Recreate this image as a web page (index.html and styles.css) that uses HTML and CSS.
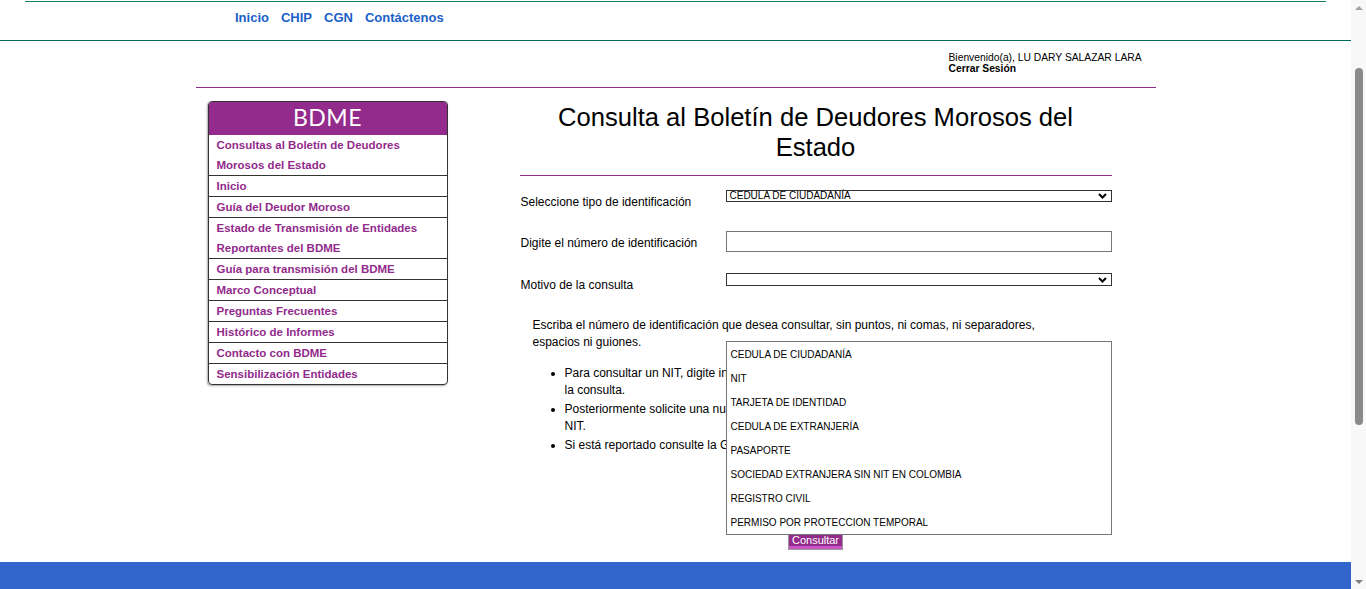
FILE: index.html
```html
<!DOCTYPE html>
<html lang="es">
<head>
<meta charset="utf-8">
<title>Consulta BDME</title>
<link rel="stylesheet" href="styles.css">
</head>
<body>
<div class="screen">
  <div class="page">
    <div class="topline"></div>
    <nav class="nav">
      <a href="#">Inicio</a>
      <a href="#">CHIP</a>
      <a href="#">CGN</a>
      <a href="#">Contáctenos</a>
    </nav>
    <div class="rule-teal"></div>
    <div class="container">
      <div class="userbar">
        <div>Bienvenido(a), LU DARY SALAZAR LARA</div>
        <a class="logout" href="#">Cerrar Sesión</a>
      </div>
      <div class="rule-purple"></div>
      <div class="content">
        <aside class="sidebar">
          <div class="side-head">BDME</div>
          <ul class="side-list">
            <li><a href="#">Consultas al Boletín de Deudores Morosos del Estado</a></li>
            <li><a href="#">Inicio</a></li>
            <li><a href="#">Guía del Deudor Moroso</a></li>
            <li><a href="#">Estado de Transmisión de Entidades Reportantes del BDME</a></li>
            <li><a href="#">Guía para transmisión del BDME</a></li>
            <li><a href="#">Marco Conceptual</a></li>
            <li><a href="#">Preguntas Frecuentes</a></li>
            <li><a href="#">Histórico de Informes</a></li>
            <li><a href="#">Contacto con BDME</a></li>
            <li><a href="#">Sensibilización Entidades</a></li>
          </ul>
        </aside>
        <main class="main">
          <h1 class="title">Consulta al Boletín de Deudores Morosos del Estado</h1>
          <div class="title-rule"></div>
          <div class="form">
            <div class="row row-1">
              <div class="label">Seleccione tipo de identificación</div>
              <div class="select">
                <span>CEDULA DE CIUDADANÍA</span>
                <svg class="chev" width="9" height="6" viewBox="0 0 9 6"><path d="M1 1 L4.5 4.5 L8 1" fill="none" stroke="#000" stroke-width="2"/></svg>
              </div>
            </div>
            <div class="row row-2">
              <div class="label">Digite el número de identificación</div>
              <input class="input" type="text" aria-label="Número de identificación">
            </div>
            <div class="row row-3">
              <div class="label">Motivo de la consulta</div>
              <div class="select select-tall">
                <span></span>
                <svg class="chev" width="9" height="6" viewBox="0 0 9 6"><path d="M1 1 L4.5 4.5 L8 1" fill="none" stroke="#000" stroke-width="2"/></svg>
              </div>
            </div>
          </div>
          <p class="note">Escriba el número de identificación que desea consultar, sin puntos, ni comas, ni separadores, espacios ni guiones.</p>
          <ul class="bullets">
            <li>Para consultar un NIT, digite inicialmente el número sin dígito de verificación y realice<br>la consulta.</li>
            <li>Posteriormente solicite una nueva consulta con el dígito de verificación del<br>NIT.</li>
            <li>Si está reportado consulte la Guía del Deudor Moroso.</li>
          </ul>
          <div class="actions"><button class="btn" type="button">Consultar</button></div>
          <ul class="popup">
            <li>CEDULA DE CIUDADANÍA</li>
            <li>NIT</li>
            <li>TARJETA DE IDENTIDAD</li>
            <li>CEDULA DE EXTRANJERÍA</li>
            <li>PASAPORTE</li>
            <li>SOCIEDAD EXTRANJERA SIN NIT EN COLOMBIA</li>
            <li>REGISTRO CIVIL</li>
            <li>PERMISO POR PROTECCION TEMPORAL</li>
          </ul>
        </main>
      </div>
    </div>
    <footer class="footer"></footer>
  </div>
  <div class="scrollbar">
    <div class="sb-btn"><span class="arrow-up"></span></div>
    <div class="sb-track"><div class="sb-thumb"></div></div>
    <div class="sb-btn"><span class="arrow-down"></span></div>
  </div>
</div>
</body>
</html>
```
FILE: styles.css
```css
html, body {
  margin: 0;
  padding: 0;
  background: #fff;
}
body {
  font-family: "Liberation Sans", Arial, sans-serif;
  color: #000;
  overflow: hidden;
}
.screen {
  display: flex;
  height: 589px;
  overflow: hidden;
}
.page {
  flex: 1;
  min-width: 0;
  display: flex;
  flex-direction: column;
}
.topline {
  height: 1px;
  margin: 1px 25px 0;
  background: #168062;
}
.nav {
  height: 38px;
  box-sizing: border-box;
  padding: 8px 0 0 235px;
  display: flex;
  align-items: flex-start;
  gap: 12px;
}
.nav a {
  font-size: 13px;
  font-weight: bold;
  line-height: 15px;
  color: #1a5fc9;
  text-decoration: none;
}
.rule-teal {
  height: 1px;
  background: #006a5e;
}
.container {
  width: 960px;
  margin: 0 auto;
  flex: 1;
}
.userbar {
  height: 46px;
  box-sizing: border-box;
  padding: 11px 0 0 753px;
  font-size: 10.3px;
  line-height: 11px;
}
.logout {
  display: block;
  font-weight: bold;
  color: #000;
  text-decoration: none;
}
.rule-purple {
  height: 1px;
  background: #8b2b8b;
}
.content {
  display: flex;
  align-items: flex-start;
  padding-top: 13px;
}
.sidebar {
  margin-left: 12px;
  width: 240px;
  box-sizing: border-box;
  border: 1px solid #333;
  border-radius: 4px;
  overflow: hidden;
  box-shadow: -1px 1px 2px rgba(0, 0, 0, 0.35);
}
.side-head {
  height: 33px;
  background: #922b8c;
  color: #fff;
  font-family: Lato, "Liberation Sans", sans-serif;
  font-size: 23px;
  line-height: 31px;
  text-align: center;
  letter-spacing: 0.5px;
}
.side-list {
  list-style: none;
  margin: 0;
  padding: 0;
}
.side-list li {
  border-top: 1px solid #333;
}
.side-list li:first-child {
  border-top: 0;
}
.side-list a {
  display: block;
  padding: 0 8px;
  font-size: 11.5px;
  font-weight: bold;
  line-height: 20px;
  color: #922b8c;
  text-decoration: none;
}
.main {
  position: relative;
  margin-left: 72px;
  width: 592px;
}
.title {
  margin: 1px 0 0;
  font-size: 25.6px;
  font-weight: normal;
  line-height: 30px;
  text-align: center;
}
.title-rule {
  height: 1px;
  margin-top: 13px;
  background: #8b2b8b;
}
.form {
  margin-top: 14px;
}
.row {
  display: flex;
  align-items: flex-start;
}
.row-1 { height: 41px; }
.row-2 { height: 42px; }
.row-3 { height: 43px; }
.label {
  width: 206px;
  box-sizing: border-box;
  padding-left: 1px;
  margin-top: 5px;
  font-size: 12px;
  line-height: 15px;
}
.select {
  width: 386px;
  height: 12px;
  box-sizing: border-box;
  border: 1px solid #333;
  background: #fff;
  display: flex;
  align-items: center;
  justify-content: space-between;
  padding: 0 4px 0 3px;
  font-size: 10px;
  line-height: 10px;
}
.select-tall {
  height: 13px;
}
.chev {
  display: block;
  flex: none;
}
.input {
  display: block;
  width: 386px;
  height: 21px;
  box-sizing: border-box;
  margin: 0;
  padding: 0 3px;
  border: 1px solid #767676;
  background: #fff;
  font: 12px "Liberation Sans", Arial, sans-serif;
}
.note {
  margin: 0;
  padding: 1px 40px 0 13px;
  font-size: 12px;
  line-height: 17px;
}
.bullets {
  margin: 14px 0 0;
  padding: 0 12px 0 45px;
  font-size: 12px;
  line-height: 17px;
}
.bullets li {
  margin-bottom: 2px;
}
.actions {
  margin-top: 78px;
  display: flex;
  justify-content: center;
}
.btn {
  height: 18px;
  box-sizing: border-box;
  margin: 0;
  padding: 1px 3px 0;
  border: 1px solid #9a9a9a;
  border-top: 0;
  background: #932b8c;
  box-shadow: inset 0 -3px 0 #c956c4;
  color: #fff;
  font: 11px/14px "Liberation Sans", Arial, sans-serif;
  display: flex;
  align-items: flex-start;
}
.popup {
  position: absolute;
  left: 206px;
  top: 240px;
  z-index: 2;
  width: 386px;
  box-sizing: border-box;
  margin: 0;
  padding: 0;
  list-style: none;
  border: 1px solid #767676;
  background: #fff;
}
.popup li {
  height: 24px;
  box-sizing: border-box;
  padding: 1px 0 0 4px;
  line-height: 24px;
  font-size: 10px;
}
.footer {
  height: 27px;
  flex: none;
  background: #3366cc;
}
.scrollbar {
  width: 15px;
  flex: none;
  background: #f8f8f8;
  display: flex;
  flex-direction: column;
}
.sb-btn {
  height: 15px;
  display: flex;
  align-items: center;
  justify-content: center;
}
.arrow-up {
  width: 0;
  height: 0;
  border-left: 4px solid transparent;
  border-right: 4px solid transparent;
  border-bottom: 4px solid #a3a3a3;
}
.arrow-down {
  width: 0;
  height: 0;
  border-left: 4px solid transparent;
  border-right: 4px solid transparent;
  border-top: 4px solid #7f7f7f;
}
.sb-track {
  flex: 1;
  display: flex;
  justify-content: center;
  padding-top: 53px;
}
.sb-thumb {
  width: 8px;
  height: 357px;
  border-radius: 4px;
  background: #8a8a8a;
}
```
